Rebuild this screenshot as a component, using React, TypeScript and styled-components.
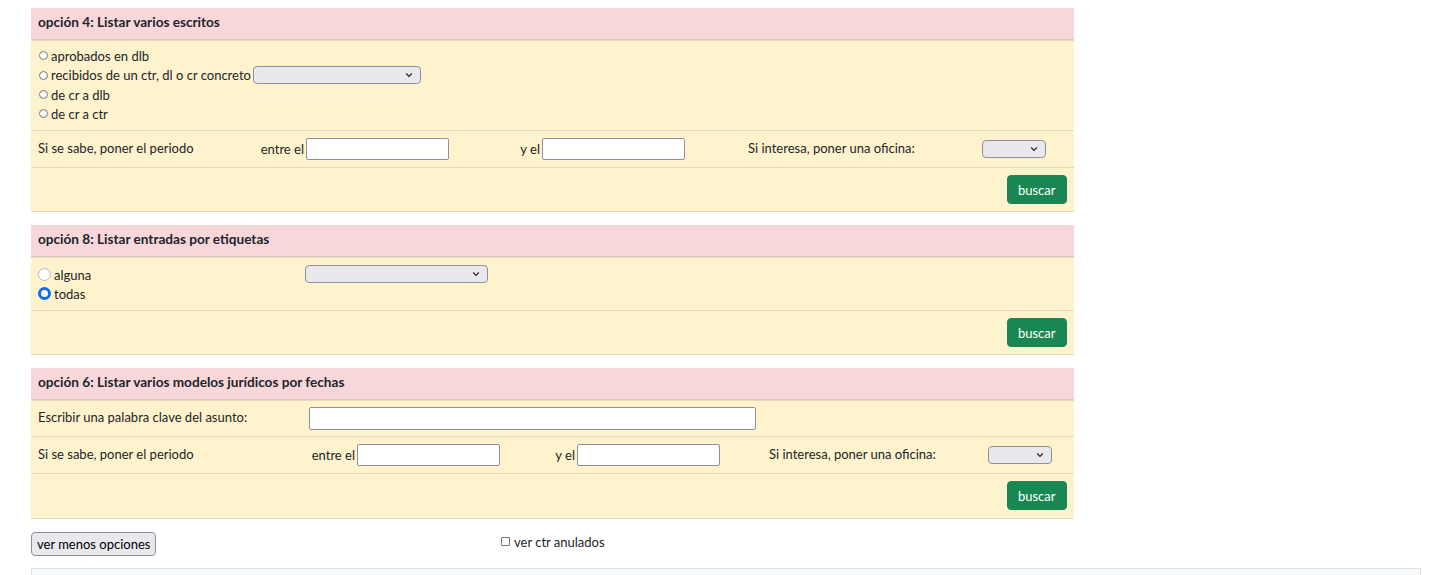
import React from "react";
import styled, { createGlobalStyle } from "styled-components";

const GlobalStyle = createGlobalStyle`
  body {
    margin: 8px;
    background: #ffffff;
    font-family: Lato, "Noto Sans", sans-serif;
    font-size: 13px;
    color: #212529;
  }
  input, select, button {
    font-family: Lato, "Noto Sans", sans-serif;
    font-size: 13px;
  }
`;

const Page = styled.div`
  padding: 0 2px 0 23px;
`;

const Panel = styled.div`
  width: 75%;
  margin-bottom: 13px;
  border-bottom: 1px solid #e6dbb9;
`;

const Head = styled.div`
  background: #f8d7da;
  border-bottom: 1px solid #dfc2c4;
  padding: 6px 7px 9px;
  line-height: 16px;
  font-size: 13.6px;
  font-weight: bold;
  color: #212529;
`;

const Row = styled.div<{ $cols?: string; $pad?: string }>`
  display: grid;
  grid-template-columns: ${(p) => p.$cols || "1fr"};
  align-items: center;
  background: #fff3cd;
  border-top: 1px solid #e6dbb9;
  padding: ${(p) => p.$pad || "7px 7px"};
  &:first-of-type {
    border-top: none;
  }
`;

const Cell = styled.div<{ $align?: string; $top?: boolean }>`
  display: flex;
  align-items: center;
  align-self: ${(p) => (p.$top ? "flex-start" : "center")};
  justify-content: ${(p) => p.$align || "flex-start"};
  white-space: nowrap;
`;

const Label = styled.span`
  margin-top: -3px;
`;

const Stack = styled.div`
  display: flex;
  flex-direction: column;
`;

const Line = styled.label<{ $h?: number }>`
  display: flex;
  align-items: center;
  min-height: ${(p) => p.$h || 19}px;
`;

const SmallRadio = styled.input`
  appearance: none;
  box-sizing: border-box;
  width: 9px;
  height: 9px;
  margin: 0 3px 0 1px;
  border: 1px solid #767676;
  border-radius: 50%;
  background: #ffffff;
`;

const Radio = styled.input`
  appearance: none;
  box-sizing: border-box;
  width: 13px;
  height: 13px;
  margin: 0 3px 0 0;
  border: 1px solid #b9b9c0;
  border-radius: 50%;
  background: #ffffff;
  &:checked {
    border: 3.5px solid #0b6cf5;
  }
`;

const PickWrap = styled.span<{ $w: number }>`
  position: relative;
  display: inline-flex;
  width: ${(p) => p.$w}px;
  height: 18px;
  margin-left: 2px;
`;

const Picker = styled.select`
  appearance: none;
  width: 100%;
  height: 100%;
  box-sizing: border-box;
  border: 1px solid #8f8f9d;
  border-radius: 4px;
  background: #e9e9ed;
`;

const Chevron = styled.svg`
  position: absolute;
  right: 8px;
  top: 6px;
  pointer-events: none;
`;

const Select = ({ w }: { w: number }) => (
  <PickWrap $w={w}>
    <Picker />
    <Chevron width="8" height="6" viewBox="0 0 8 6">
      <path d="M1.2 1.5 L4 4.3 L6.8 1.5" fill="none" stroke="#222" strokeWidth="1.2" />
    </Chevron>
  </PickWrap>
);

const TextBox = styled.input<{ $w: number; $h?: number }>`
  width: ${(p) => p.$w}px;
  height: ${(p) => p.$h || 22}px;
  box-sizing: border-box;
  margin-left: 2px;
  padding: 1px 2px;
  border: 1px solid #8f8f9d;
  border-radius: 2px;
  background: #ffffff;
`;

const Go = styled.button`
  background: #198754;
  color: #ffffff;
  border: 1px solid #198754;
  border-radius: 4px;
  height: 29px;
  padding: 0 10px;
  cursor: pointer;
`;

const Footer = styled.div`
  display: grid;
  grid-template-columns: 470px 1fr;
  align-items: center;
  margin-top: 11px;
`;

const Plain = styled.button`
  height: 24px;
  padding: 0 5px;
  border: 1px solid #8f8f9d;
  border-radius: 4px;
  background: #e9e9ed;
  color: #000;
`;

const Check = styled.label`
  display: flex;
  align-items: center;
  margin-top: -5px;
  input {
    appearance: none;
    box-sizing: border-box;
    width: 9px;
    height: 9px;
    margin: 0 4px 0 0;
    border: 1px solid #767676;
    border-radius: 1px;
    background: #fff;
  }
`;

const Result = styled.div`
  margin-top: 12px;
  height: 20px;
  background: #f8f9fa;
  border: 1px solid #dee2e6;
`;

type PeriodProps = { cols: string; ofi: number };

const Period = ({ cols, ofi }: PeriodProps) => (
  <Row $cols={cols}>
    <Cell>
      <Label>Si se sabe, poner el periodo</Label>
    </Cell>
    <Cell $align="flex-end">
      entre el <TextBox $w={143} />
    </Cell>
    <Cell $align="flex-end">
      y el <TextBox $w={143} />
    </Cell>
    <span />
    <Cell>
      <Label>Si interesa, poner una oficina:</Label>
    </Cell>
    <Cell>
      <Select w={ofi} />
    </Cell>
  </Row>
);

const Buttons = ({ pad }: { pad?: string }) => (
  <Row $pad={pad}>
    <Cell $align="flex-end">
      <Go>buscar</Go>
    </Cell>
  </Row>
);

export default function App() {
  return (
    <Page>
      <GlobalStyle />
      <Panel>
        <Head>opción 4: Listar varios escritos</Head>
        <Row $pad="5px 7px 7px">
          <Stack>
            <Line>
              <SmallRadio type="radio" name="op4" />
              aprobados en dlb
            </Line>
            <Line $h={20}>
              <SmallRadio type="radio" name="op4" />
              recibidos de un ctr, dl o cr concreto
              <Select w={168} />
            </Line>
            <Line>
              <SmallRadio type="radio" name="op4" />
              de cr a dlb
            </Line>
            <Line>
              <SmallRadio type="radio" name="op4" />
              de cr a ctr
            </Line>
          </Stack>
        </Row>
        <Period cols="219px 192px 236px 63px 232px 1fr" ofi={64} />
        <Buttons />
      </Panel>

      <Panel>
        <Head>opción 8: Listar entradas por etiquetas</Head>
        <Row $cols="265px 1fr" $pad="7px 7px 7px">
          <Stack>
            <Line>
              <Radio type="radio" name="op8" />
              alguna
            </Line>
            <Line>
              <Radio type="radio" name="op8" defaultChecked />
              todas
            </Line>
          </Stack>
          <Cell $top>
            <Select w={183} />
          </Cell>
        </Row>
        <Buttons />
      </Panel>

      <Panel>
        <Head>opción 6: Listar varios modelos jurídicos por fechas</Head>
        <Row $cols="269px 1fr" $pad="6px 7px">
          <Cell>
            <Label>Escribir una palabra clave del asunto:</Label>
          </Cell>
          <Cell>
            <TextBox $w={447} $h={23} />
          </Cell>
        </Row>
        <Period cols="262px 200px 220px 49px 217px 1fr" ofi={64} />
        <Buttons pad="7px 7px 8px" />
      </Panel>

      <Footer>
        <Cell>
          <Plain>ver menos opciones</Plain>
        </Cell>
        <Check>
          <input type="checkbox" />
          ver ctr anulados
        </Check>
      </Footer>
      <Result />
    </Page>
  );
}
